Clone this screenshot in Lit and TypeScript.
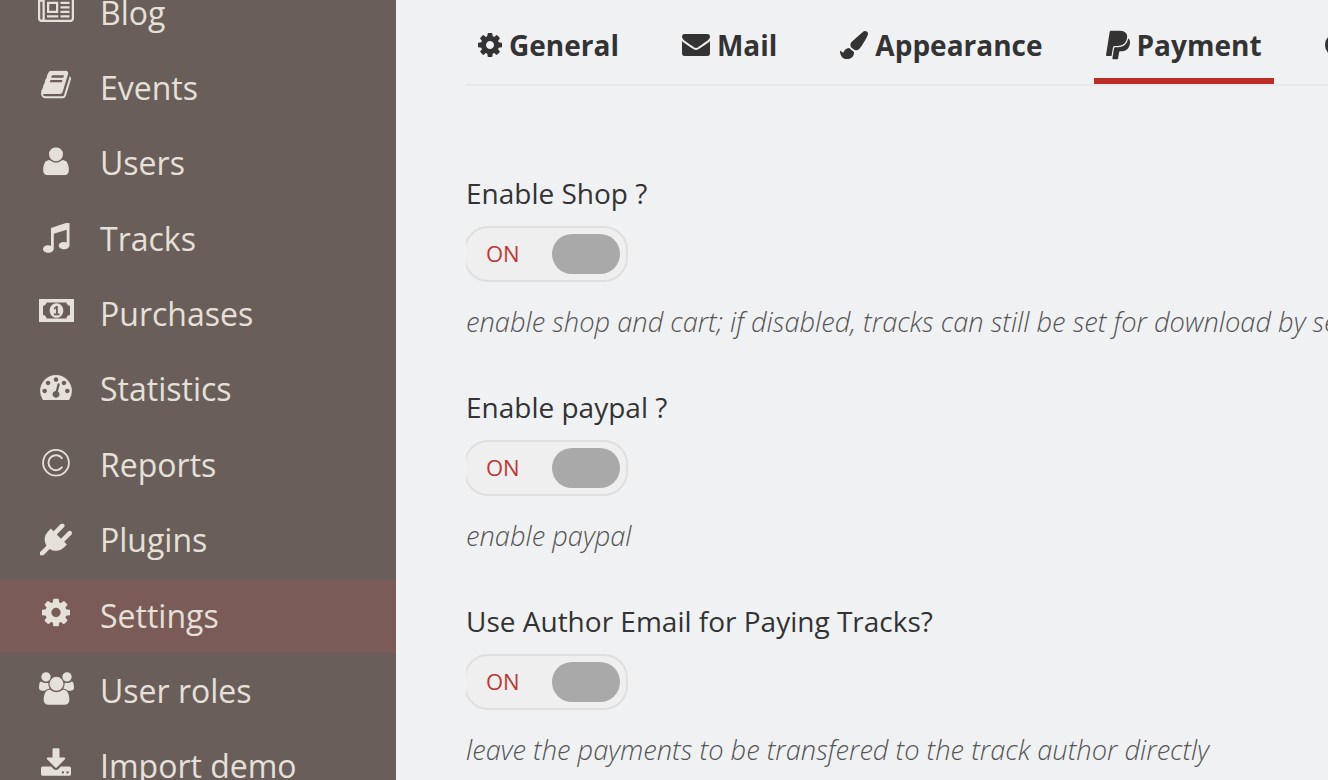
import { LitElement, html, css, svg } from "lit";
import { customElement } from "lit/decorators.js";

const ic = (vb: string, body: unknown, w: number, h: number) =>
  html`<svg class="ic" viewBox="${vb}" style="width:${w}px;height:${h}px" fill="currentColor">${body}</svg>`;
const p = (d: string) => svg`<path d="${d}"/>`;

const COG = "M1152 896q0-106-75-181t-181-75-181 75-75 181 75 181 181 75 181-75 75-181zm512-109v222q0 12-8 23t-20 13l-185 28q-19 54-39 91 35 50 107 138 10 12 10 25t-9 23q-27 37-99 108t-94 71q-12 0-26-9l-138-108q-44 23-91 38-16 136-29 186-7 28-36 28h-222q-14 0-24.500-8.500t-11.500-21.500l-28-184q-49-16-90-37l-141 107q-10 9-25 9-14 0-25-11-126-114-165-168-7-10-7-23 0-12 8-23 15-21 51-66.500t54-70.500q-27-50-41-99l-183-27q-13-2-21-12.500t-8-23.500v-222q0-12 8-23t19-13l186-28q14-46 39-92-40-57-107-138-10-12-10-24 0-10 9-23 26-36 98.500-107.500t94.500-71.500q13 0 26 10l138 107q44-23 91-38 16-136 29-186 7-28 36-28h222q14 0 24.500 8.500t11.500 21.500l28 184q49 16 90 37l142-107q9-9 24-9 13 0 25 10 129 119 165 170 7 8 7 22 0 12-8 23-15 21-51 66.500t-54 70.500q26 50 41 98l183 28q13 2 21 12.500t8 23.500z";
const ENV = "M1792 710v794q0 66-47 113t-113 47H160q-66 0-113-47T0 1504V710q44 49 101 87 362 246 497 345 57 42 92.500 65.500t94.500 48 110 24.500h2q51 0 110-24.500t94.500-48 92.500-65.500q170-123 498-345 57-39 100-87zm0-294q0 79-49 151t-122 123q-376 261-468 325-10 7-42.500 30.500t-54 38-52 32.500-57.500 27-50 9h-2q-23 0-50-9t-57.500-27-52-32.500-54-38T639 1015q-91-64-262-182.500T172 690q-62-42-117-115.500T0 438q0-78 41.500-130T160 256h1472q65 0 112.500 47t47.500 113z";
const BRUSH = "M167.02 309.34c-40.12 2.58-76.53 17.86-97.19 72.3-2.35 6.21-8 9.98-14.59 9.98-11.11 0-45.46-27.67-55.25-34.35C0 439.62 37.93 512 128 512c75.86 0 128-43.77 128-120.19 0-3.11-.65-6.08-.97-9.13l-88.01-73.34zM457.89 0c-15.16 0-29.37 6.71-40.21 16.45C213.27 199.05 192 203.34 192 257.09c0 13.7 3.25 26.76 8.73 38.7l63.82 53.18c7.21 1.8 14.64 3.03 22.39 3.03 62.11 0 98.11-45.47 211.16-256.46 7.38-14.35 13.9-29.85 13.9-45.99C512 20.64 486 0 457.89 0z";
const PAYPAL = "M111.4 295.9c-3.5 19.2-17.4 108.7-21.5 134-.3 1.8-1 2.5-3 2.5H12.3c-7.6 0-13.1-6.6-12.1-13.9L58.8 46.6c1.5-9.6 10.1-16.9 20-16.9 152.3 0 165.1-3.7 204 11.4 60.1 23.3 65.6 79.5 44 140.3-21.5 62.6-72.5 89.5-140.1 90.3-43.4.7-69.5-7-75.3 24.2zM357.1 152c-1.8-1.3-2.5-1.8-3 1.3-2 11.4-5.1 22.5-8.8 33.6-39.9 113.8-150.5 103.9-204.5 103.9-6.1 0-10.1 3.3-10.9 9.4-22.6 140.4-27.1 169.7-27.1 169.7-1 7.1 3.5 12.9 10.6 12.9h63.5c8.6 0 15.7-6.3 17.4-14.9.7-5.4-1.1 6.1 14.4-91.3 4.6-22 14.3-19.7 29.3-19.7 71 0 126.4-28.8 142.9-112.3 6.5-34.8 4.6-71.4-23.8-92.6z";
const PLUG = "M1755 453q37 38 37 90.500t-37 90.500l-401 400 150 150-160 160q-163 163-389.500 186.500T543 1430l-362 362H0v-181l362-362q-124-185-100.500-411.500T448 448l160-160 150 150 400-401q38-37 91-37t90 37 37 90.500-37 90.500L939 618l235 235 400-401q38-37 91-37t90 38z";
const DL = "M1344 1344q0-26-19-45t-45-19-45 19-19 45 19 45 45 19 45-19 19-45zm256 0q0-26-19-45t-45-19-45 19-19 45 19 45 45 19 45-19 19-45zm128-224v320q0 40-28 68t-68 28H160q-40 0-68-28t-28-68v-320q0-40 28-68t68-28h465l135 136q58 56 136 56t136-56l136-136h464q40 0 68 28t28 68zm-325-569q17 41-14 70l-448 448q-18 19-45 19t-45-19L403 621q-31-29-14-70 17-39 59-39h256V64q0-26 19-45t45-19h256q26 0 45 19t19 45v448h256q42 0 59 39z";
const NEWS = "M1024 512H640v384h384V512zm128 640v128H512v-128h640zm0-768v640H512V384h640zm640 768v128h-512v-128h512zm0-256v128h-512V896h512zm0-256v128h-512V640h512zm0-256v128h-512V384h512zM256 1344V384H128v960q0 26 19 45t45 19 45-19 19-45zm1664 0V256H384v1088q0 33-11 64h1483q26 0 45-19t19-45zM2048 128v1216q0 80-56 136t-136 56H192q-80 0-136-56T0 1344V256h256V128h1792z";
const BOOK = "M1639 478q40 57 18 129l-275 906q-19 64-76.500 107.500T1183 1664H260q-77 0-148.500-53.500T12 1479q-24-67-2-127 0-4 3-27t4-37q1-8-3-21.500t-3-19.500q2-11 8-21t16.500-23.500T52 1179q23-38 45-91.500t30-91.500q3-10 .5-30t-.5-28q3-11 17-28t17-23q21-36 42-92t25-90q1-9-2.500-32t.5-28q4-13 22-30.500t22-22.500q19-26 42.500-84.500T339 424q1-8-3-25.500t-2-26.500q2-8 9-18t18-23 17-21q8-12 16.500-30.500t15-35 16-36 19.500-32 26.500-23.500 36-11.500T555 138l-1 3q38-9 51-9h761q74 0 114 56t18 130l-274 906q-36 119-71.500 153.500T1024 1412H155q-27 0-38 15-11 16-1 43 24 70 144 70h923q29 0 56-15.500t35-41.500l300-987q7-22 5-57 38 15 59 43zm-1064 2q-4 13 2 22.500t20 9.500h608q13 0 25.500-9.500T1247 480l21-64q4-13-2-22.500t-20-9.500H638q-13 0-25.500 9.500T596 416zm-83 256q-4 13 2 22.500t20 9.500h608q13 0 25.500-9.500T1164 736l21-64q4-13-2-22.500t-20-9.500H555q-13 0-25.500 9.500T513 672z";
const USER = "M1600 1405q0 120-73 189.500t-194 69.500H459q-121 0-194-69.500T192 1405q0-53 3.500-103.500t14-109T236 1084t43-97.500 62-81 85.500-53.500T538 832q9 0 42 21.500t74.500 48 108 48T896 971t133.500-21.500 108-48 74.500-48 42-21.500q61 0 111.500 20t85.500 53.500 62 81 43 97.500 26.500 108.500 14 109 3.500 103.500zm-320-893q0 159-112.500 271.500T896 896 624.500 783.500 512 512t112.500-271.500T896 128t271.500 112.500T1280 512z";
const USERS = "M593 896q-162 5-265 128H194q-82 0-138-40.500T0 865q0-353 124-353 6 0 43.500 21t97.500 42.500T384 597q67 0 133-23-5 37-5 66 0 139 81 256zm1071 637q0 120-73 189.500t-194 69.500H523q-121 0-194-69.500T256 1533q0-53 3.500-103.500t14-109T300 1212t43-97.500 62-81 85.500-53.500T602 960q10 0 43 21.500t73 48 107 48 135 21.500 135-21.500 107-48 73-48 43-21.500q61 0 111.500 20t85.500 53.500 62 81 43 97.500 26.500 108.500 14 109 3.500 103.500zM640 256q0 106-75 181t-181 75-181-75-75-181 75-181 181-75 181 75 75 181zm704 384q0 159-112.500 271.500T960 1024 688.500 911.500 576 640t112.500-271.500T960 256t271.500 112.500T1344 640zm576 225q0 78-56 118.500t-138 40.500h-134q-103-123-265-128 81-117 81-256 0-29-5-66 66 23 133 23 59 0 119-21.500t97.500-42.500 43.500-21q124 0 124 353zm-128-609q0 106-75 181t-181 75-181-75-75-181 75-181 181-75 181 75 75 181z";
const DASH = "M384 1152q0-53-37.500-90.500T256 1024t-90.500 37.500T128 1152t37.500 90.500T256 1280t90.500-37.500T384 1152zm192-448q0-53-37.500-90.500T448 576t-90.500 37.500T320 704t37.500 90.500T448 832t90.500-37.500T576 704zm428 481l101-382q6-26-7.500-48.500T1059 725t-48 6.500-30 39.500l-101 382q-60 5-107 43.500T710 1295q-20 77 20 146t117 89 146-20 89-117q16-60-6-117t-72-91zm660-33q0-53-37.500-90.500T1536 1024t-90.500 37.500-37.500 90.500 37.500 90.500 90.500 37.500 90.500-37.500 37.500-90.500zm-640-640q0-53-37.500-90.500T896 384t-90.500 37.500T768 512t37.500 90.500T896 640t90.500-37.500T1024 512zm448 192q0-53-37.500-90.500T1344 576t-90.500 37.500T1216 704t37.500 90.500T1344 832t90.500-37.500T1472 704zm320 448q0 261-141 483-19 29-54 29H195q-35 0-54-29Q0 1414 0 1152q0-182 71-348t191-286 286-191 348-71 348 71 286 191 191 286 71 348z";

const menu: { n: string; i: unknown; dy: number }[] = [
  { n: "Blog", i: ic("0 128 2048 1408", p(NEWS), 36, 25), dy: -4 },
  { n: "Events", i: ic("0 128 1664 1536", p(BOOK), 30, 28), dy: -3.4 },
  { n: "Users", i: ic("192 128 1408 1536", p(USER), 26, 28), dy: -2.8 },
  { n: "Tracks", i: ic("0 0 28 30", svg`<path d="M9 6.500 27.500.3v23.200c0 2.700-2.700 4.300-5.500 4.300s-5.300-1.500-5.300-3.700 2.600-3.700 5.300-3.700c1 0 2 .2 2.700.6V8.300L11.800 12.300V27c0 2.800-2.700 4.300-5.500 4.300S1 29.800 1 27.500s2.600-3.700 5.300-3.700c1 0 2 .2 2.700.6z" transform="translate(0 -1.500)"/>`, 28, 30), dy: -1 },
  { n: "Purchases", i: ic("0 0 35 23", svg`<path fill-rule="evenodd" d="M0 0h35v23H0zM4 7v9c2 .2 3.300 1.500 3.600 3.400h19.800c.3-1.900 1.600-3.200 3.600-3.400V7c-2-.2-3.300-1.500-3.600-3.400H7.600C7.300 5.500 6 6.800 4 7z"/><path fill-rule="evenodd" d="M17.500 4.200c4 0 6.800 3.300 6.800 7.300s-2.800 7.300-6.800 7.300-6.800-3.300-6.800-7.300 2.800-7.300 6.800-7.300zM14.800 16.200h5.700v-1.600h-1.700V7h-1.600l-2.600 2.200 1 1.300 1.300-1.100.1 5.200h-2.200z"/>`, 35, 23), dy: -4 },
  { n: "Statistics", i: ic("0 256 1792 1408", p(DASH), 32, 25), dy: -2 },
  { n: "Reports", i: ic("0 0 28 28", svg`<circle cx="14" cy="14" r="12.900" fill="none" stroke="currentColor" stroke-width="1.800"/><path d="M20.300 18A7.500 7.500 0 1 1 20.300 10" fill="none" stroke="currentColor" stroke-width="1.900"/>`, 28, 28), dy: -2.300 },
  { n: "Plugins", i: ic("0 0 1792 1792", p(PLUG), 32, 32), dy: -1.600 },
  { n: "Settings", i: ic("128 128 1536 1536", p(COG), 28, 28), dy: -3.500 },
  { n: "User roles", i: ic("0 0 1920 1792", p(USERS), 35, 33), dy: -3 },
  { n: "Import demo", i: ic("64 0 1664 1536", p(DL), 30, 28), dy: -5 },
];

const tabs = [
  { t: "General", i: ic("128 128 1536 1536", p(COG), 24, 24) },
  { t: "Mail", i: ic("0 256 1792 1408", p(ENV), 28, 22) },
  { t: "Appearance", i: ic("0 0 512 512", p(BRUSH), 28, 28) },
  { t: "Payment", i: ic("0 0 384 512", p(PAYPAL), 24, 32), on: true },
  { t: "", i: ic("0 0 24 24", svg`<circle cx="12" cy="12" r="12"/>`, 24, 24) },
];

const fields = [
  ["Enable Shop ?", "enable shop and cart; if disabled, tracks can still be set for download by setting their price to zero"],
  ["Enable paypal ?", "enable paypal"],
  ["Use Author Email for Paying Tracks?", "leave the payments to be transfered to the track author directly"],
];

@customElement("app-root")
export class AppRoot extends LitElement {
  static styles = css`
    :host { display: flex; width: 1328px; height: 780px; overflow: hidden; background: #f0f1f3; font-family: "Open Sans", sans-serif; }
    .side { width: 396px; flex: none; background: #6a5e5b; color: #e5e0d8; height: 780px; overflow: hidden; }
    .list { margin-top: -23.500px; display: flex; flex-direction: column; }
    .item { height: 73px; margin-bottom: 2.380px; display: flex; align-items: center; font-size: 32px; flex: none; }
    .item span { margin-top: -2px; }
    .item.on { background: #7b5b58; }
    .slot { width: 100px; flex: none; display: flex; justify-content: center; padding-left: 12px; box-sizing: border-box; }
    .ic { display: block; flex: none; }
    .main { flex: 1; min-width: 0; padding-left: 70px; overflow: hidden; color: #333; }
    .tabs { display: flex; height: 84px; border-bottom: 2px solid #e8e9eb; margin-bottom: 89px; white-space: nowrap; width: 1000px; }
    .tab { display: flex; align-items: center; gap: 7px; box-sizing: border-box; font-size: 28px; font-weight: 700; padding: 12px 12px 0; height: 84px; margin-right: 39px; color: #333; border-bottom: 6px solid transparent; }
    .tab.on { border-bottom-color: #bb2d26; }
    .field { height: 214px; }
    .lab { font-size: 28px; line-height: 36px; color: #333; }
    .clip { margin-top: 15px; width: 162px; height: 56px; overflow: hidden; }
    .tog { margin-left: -2px; width: 164px; height: 56px; box-sizing: border-box; border: 2px solid #dfdfdf; border-radius: 24px; display: flex; align-items: center; justify-content: space-between; padding: 0 6px 0 20px; background: #f0efef; }
    .tog span { color: #b93a33; font-size: 22px; margin-top: -2px; }
    .tog i { width: 68px; height: 40px; border-radius: 20px; background: #a9a9a9; }
    .hint { margin-top: 22px; font-size: 27.250px; line-height: 36px; font-style: italic; font-weight: 300; color: #555; white-space: nowrap; }
  `;
  render() {
    return html`
      <aside class="side"><div class="list">
        ${menu.map((m) => html`<div class="item ${m.n === "Settings" ? "on" : ""}"><div class="slot" style="transform:translateY(${m.dy}px)">${m.i}</div><span>${m.n}</span></div>`)}
      </div></aside>
      <main class="main">
        <nav class="tabs">${tabs.map((t) => html`<div class="tab ${t.on ? "on" : ""}">${t.i}${t.t ? html`<span>${t.t}</span>` : ""}</div>`)}</nav>
        ${fields.map(([l, h]) => html`<section class="field"><div class="lab">${l}</div><div class="clip"><div class="tog"><span>ON</span><i></i></div></div><div class="hint">${h}</div></section>`)}
      </main>`;
  }
}
